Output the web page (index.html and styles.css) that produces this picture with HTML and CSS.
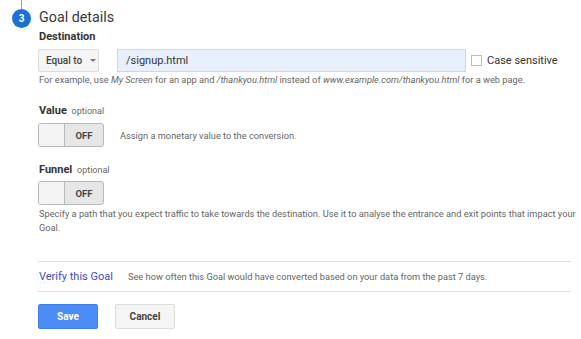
FILE: index.html
```html
<!DOCTYPE html>
<html>
<head>
<meta charset="utf-8">
<link rel="stylesheet" href="styles.css">
</head>
<body>
<div class="step">
  <div class="rail">
    <div class="rail-line"></div>
    <div class="badge">3</div>
  </div>
  <div class="content">
    <h2 class="title">Goal details</h2>
    <div class="label">Destination</div>
    <div class="dest-row">
      <div class="select">Equal to <span class="caret"></span></div>
      <div class="input">/signup.html</div>
      <label class="check"><span class="box"></span>Case sensitive</label>
    </div>
    <p class="hint">For example, use <i>My Screen</i> for an app and <i>/thankyou.html</i> instead of <i>www.example.com/thankyou.html</i> for a web page.</p>

    <div class="label sec">Value <span class="opt">optional</span></div>
    <div class="toggle-row">
      <div class="toggle"><span class="knob"></span><span class="state">OFF</span></div>
      <span class="desc">Assign a monetary value to the conversion.</span>
    </div>

    <div class="label sec2">Funnel <span class="opt">optional</span></div>
    <div class="toggle-row t2">
      <div class="toggle"><span class="knob"></span><span class="state">OFF</span></div>
    </div>
    <p class="para">Specify a path that you expect traffic to take towards the destination. Use it to analyse the entrance and exit points that impact your Goal.</p>

    <div class="verify">
      <a class="link">Verify this Goal</a>
      <span class="desc">See how often this Goal would have converted based on your data from the past 7 days.</span>
    </div>

    <div class="actions">
      <button class="btn primary">Save</button>
      <button class="btn">Cancel</button>
    </div>
  </div>
</div>
</body>
</html>
```

FILE: styles.css
```css
html, body {
  margin: 0;
  padding: 0;
  background: #fff;
}
body {
  font-family: Roboto, "Liberation Sans", Arial, sans-serif;
  color: #333;
}
.step {
  display: flex;
}
.rail {
  width: 38px;
  flex: none;
  display: flex;
  flex-direction: column;
  padding-left: 12px;
  box-sizing: border-box;
}
.rail-line {
  width: 1px;
  height: 9px;
  background: #9e9e9e;
  margin-left: 9px;
}
.badge {
  width: 19px;
  height: 19px;
  border-radius: 50%;
  background: #1b72d6;
  color: #fff;
  font-size: 10px;
  font-weight: 700;
  line-height: 19px;
  text-align: center;
}
.content {
  flex: 1;
  padding-right: 10px;
}
.title {
  margin: 7px 0 0 1px;
  font-size: 14.3px;
  font-weight: 400;
  line-height: 20px;
  color: #3a3a3a;
}
.label {
  margin: 3px 0 0 1px;
  font-size: 11px;
  font-weight: 700;
  line-height: 14px;
  color: #333;
}
.label.sec { margin-top: 17px; }
.label.sec2 { margin-top: 16px; }
.opt {
  font-size: 9px;
  font-weight: 400;
  color: #666;
  margin-left: 2px;
}
.dest-row {
  display: flex;
  align-items: center;
  margin-top: 5px;
}
.select {
  width: 61px;
  height: 23px;
  box-sizing: border-box;
  border: 1px solid #dcdcdc;
  background: #f5f5f5;
  border-radius: 2px;
  font-size: 10px;
  font-weight: 500;
  color: #444;
  display: flex;
  align-items: center;
  padding-left: 7px;
}
.caret {
  width: 0;
  height: 0;
  border-left: 3px solid transparent;
  border-right: 3px solid transparent;
  border-top: 3px solid #777;
  margin-left: 8px;
}
.input {
  margin-left: 18px;
  width: 349px;
  height: 23px;
  box-sizing: border-box;
  border: 1px solid #ccd6e6;
  background: #e8f0fe;
  font-size: 11px;
  color: #333;
  display: flex;
  align-items: center;
  padding-left: 8px;
}
.check {
  display: flex;
  align-items: center;
  margin-left: 5px;
  font-size: 11px;
  color: #333;
}
.box {
  width: 11px;
  height: 11px;
  box-sizing: border-box;
  border: 1px solid #bdbdbd;
  background: #fff;
  margin-right: 5px;
}
.hint {
  margin: 1px 0 0 1px;
  font-size: 9.25px;
  line-height: 14px;
  color: #666;
}
.toggle-row {
  display: flex;
  align-items: center;
  margin-top: 5px;
}
.toggle-row.t2 { margin-top: 4px; }
.toggle {
  display: flex;
  width: 66px;
  height: 24px;
  box-sizing: border-box;
  border: 1px solid #b8b8b8;
  border-radius: 3px;
  background: #e6e6e6;
  overflow: hidden;
}
.knob {
  width: 25px;
  background: #f4f4f4;
  border-right: 1px solid #b8b8b8;
}
.state {
  flex: 1;
  display: flex;
  align-items: center;
  justify-content: center;
  font-size: 9.5px;
  font-weight: 700;
  color: #444;
}
.toggle-row .desc {
  margin-left: 16px;
}
.desc {
  font-size: 9.25px;
  color: #666;
}
.para {
  margin: 2px -8px 0 1px;
  font-size: 9.25px;
  line-height: 14px;
  color: #666;
}
.verify {
  margin-top: 26px;
  border-top: 1px solid #dedede;
  border-bottom: 1px solid #dedede;
  height: 29px;
  display: flex;
  align-items: center;
  padding-left: 1px;
}
.link {
  font-size: 11px;
  color: #3b50c0;
  margin-right: 15px;
}
.actions {
  display: flex;
  gap: 17px;
  margin-top: 12px;
}
.btn {
  width: 60px;
  height: 25px;
  box-sizing: border-box;
  border: 1px solid #dcdcdc;
  background: #f5f5f5;
  border-radius: 2px;
  font-family: Roboto, "Liberation Sans", Arial, sans-serif;
  font-size: 10px;
  font-weight: 700;
  color: #444;
  padding: 0;
}
.btn.primary {
  background: #4b8cf5;
  border-color: #3f80ea;
  color: #fff;
}
```
